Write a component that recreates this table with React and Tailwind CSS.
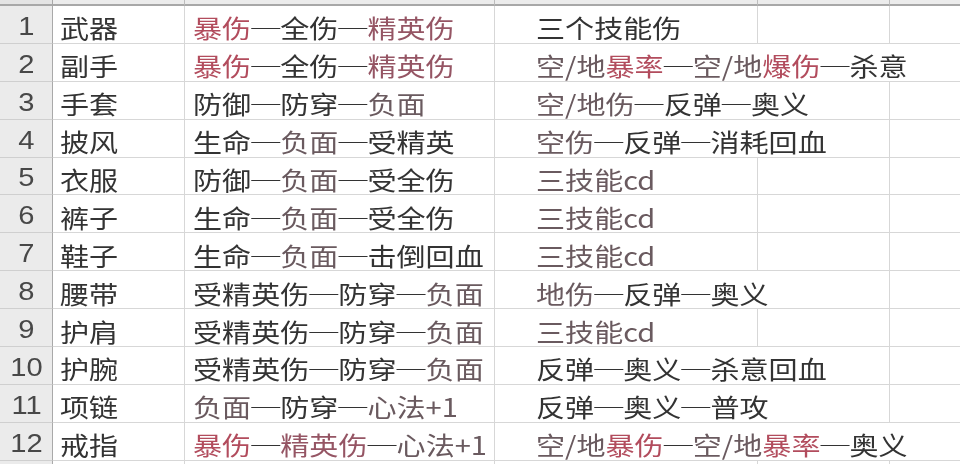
const tone = {
  d: 'text-[#333333]',
  m: 'text-[#6a5a5f]',
  r: 'text-[#b24c5d]',
  p: 'text-[#955564]',
};

const rows = [
  { n: 1, b: '武器', c: [['r', '暴伤'], ['d', '—全伤—'], ['p', '精英伤']], d: [['d', '三个技能伤']], span: 1 },
  { n: 2, b: '副手', c: [['r', '暴伤'], ['d', '—全伤—'], ['p', '精英伤']], d: [['m', '空/地'], ['r', '暴率'], ['d', '—'], ['m', '空/地'], ['r', '爆伤'], ['d', '—杀意']], span: 3 },
  { n: 3, b: '手套', c: [['d', '防御—防穿—'], ['m', '负面']], d: [['m', '空/地伤'], ['d', '—反弹—奥义']], span: 2 },
  { n: 4, b: '披风', c: [['d', '生命—'], ['m', '负面'], ['d', '—受精英']], d: [['m', '空伤'], ['d', '—反弹—消耗回血']], span: 2 },
  { n: 5, b: '衣服', c: [['d', '防御—'], ['m', '负面'], ['d', '—受全伤']], d: [['m', '三技能cd']], span: 1 },
  { n: 6, b: '裤子', c: [['d', '生命—'], ['m', '负面'], ['d', '—受全伤']], d: [['m', '三技能cd']], span: 1 },
  { n: 7, b: '鞋子', c: [['d', '生命—'], ['m', '负面'], ['d', '—击倒回血']], d: [['m', '三技能cd']], span: 1 },
  { n: 8, b: '腰带', c: [['d', '受精英伤—防穿—'], ['m', '负面']], d: [['m', '地伤'], ['d', '—反弹—奥义']], span: 2 },
  { n: 9, b: '护肩', c: [['d', '受精英伤—防穿—'], ['m', '负面']], d: [['m', '三技能cd']], span: 1 },
  { n: 10, b: '护腕', c: [['d', '受精英伤—防穿—'], ['m', '负面']], d: [['d', '反弹—奥义—杀意回血']], span: 2 },
  { n: 11, b: '项链', c: [['m', '负面'], ['d', '—防穿—'], ['m', '心法+1']], d: [['d', '反弹—奥义—普攻']], span: 2 },
  { n: 12, b: '戒指', c: [['r', '暴伤'], ['d', '—'], ['p', '精英伤'], ['d', '—'], ['m', '心法+1']], d: [['m', '空/地'], ['r', '暴伤'], ['d', '—'], ['m', '空/地'], ['r', '暴率'], ['d', '—奥义']], span: 3 },
  { n: '', b: '', c: [], d: [], span: 1 },
];

const font = "font-['Noto_Sans_CJK_SC','Noto_Sans',sans-serif]";
const cell = 'h-[37.9px] border-r border-b border-[#d7d7d7] bg-white';

function Text({ parts }) {
  return (
    <span className={`block whitespace-nowrap origin-left scale-x-[1.14] text-[25.5px] leading-none blur-[0.3px] ${font}`}>
      {parts.map(([t, s], i) => (
        <span key={i} className={tone[t]}>
          {/* the sheet's dash runs the full cell width */}
          {s.replaceAll('—', '─')}
        </span>
      ))}
    </span>
  );
}

export default function App() {
  return (
    <div className="w-[960px] h-[464px] overflow-hidden bg-white">
      <div className="grid grid-cols-[53px_132px_310px_263px_132px_70px]">
        {/* column header strip, mostly cut off */}
        <div className="h-[6px] bg-[#e4e4e4] border-r border-b-2 border-[#a8a8a8]" />
        <div className="h-[6px] bg-[#ececec] border-r border-b-2 border-r-[#bdbdbd] border-b-[#a8a8a8]" />
        <div className="h-[6px] bg-[#ececec] border-r border-b-2 border-r-[#bdbdbd] border-b-[#a8a8a8]" />
        <div className="h-[6px] bg-[#ececec] border-r border-b-2 border-r-[#bdbdbd] border-b-[#a8a8a8]" />
        <div className="h-[6px] bg-[#ececec] border-r border-b-2 border-r-[#bdbdbd] border-b-[#a8a8a8]" />
        <div className="h-[6px] bg-[#ececec] border-b-2 border-[#a8a8a8]" />

        {rows.map((row, i) => (
          <div key={i} className="contents">
            <div className="h-[37.9px] flex items-end justify-center pb-[4px] bg-[#ebebeb] border-b border-r border-b-[#cfcfcf] border-r-[#a9a9a9]">
              <span className="block origin-center scale-x-[1.12] text-[26px] leading-none text-[#484848] blur-[0.3px] font-['Liberation_Sans',sans-serif]">
                {row.n}
              </span>
            </div>
            <div className={`${cell} flex items-end pl-[7px] pb-[3px]`}>
              <Text parts={[['d', row.b]]} />
            </div>
            <div className={`${cell} flex items-end pl-[8px] pb-[3px]`}>
              <Text parts={row.c} />
            </div>
            <div
              className={`${cell} flex items-end pl-[41px] pb-[3px] overflow-visible ${
                row.span === 3 ? 'col-span-3 border-r-0' : row.span === 2 ? 'col-span-2' : ''
              }`}
            >
              <Text parts={row.d} />
            </div>
            {row.span === 1 && <div className={cell} />}
            {row.span < 3 && <div className={`${cell} border-r-0`} />}
          </div>
        ))}
      </div>
    </div>
  );
}
